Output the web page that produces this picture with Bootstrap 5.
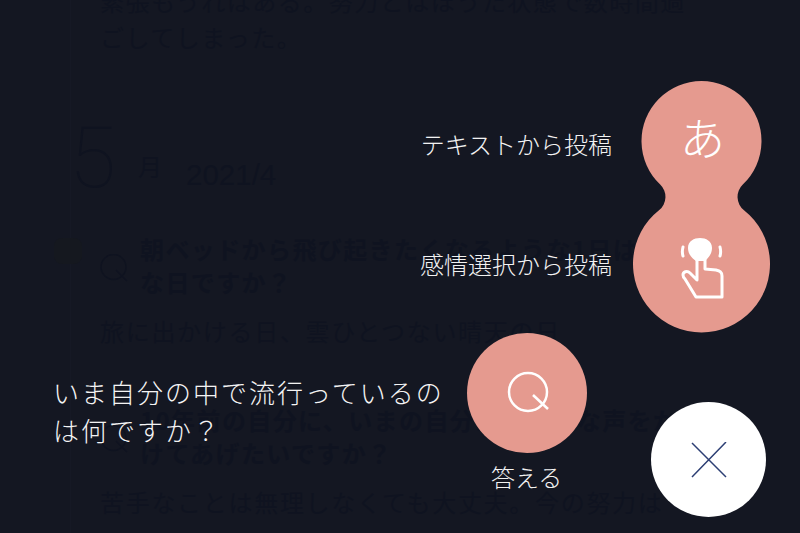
<!DOCTYPE html>
<html lang="ja">
<head>
<meta charset="utf-8">
<link href="https://cdn.jsdelivr.net/npm/bootstrap@5.3.0/dist/css/bootstrap.min.css" rel="stylesheet">
<style>
html,body{height:100%;}
body{background:#141722;overflow:hidden;font-family:"Noto Sans CJK JP","Liberation Sans",sans-serif;color:#0f1320;}
.scr{height:533px;position:relative;overflow:hidden;}
.feed{padding-left:70px;height:550px;position:relative;}
.rail{border-left:1px solid #161925;height:100%;padding-left:29px;}
.para{font-size:24px;line-height:36px;letter-spacing:1.5px;margin:-17px 0 0;width:600px;}
.num{font-family:Roboto,"Liberation Sans",sans-serif;font-weight:100;font-size:86px;line-height:70px;margin-left:-31px;width:69px;}
.mon{font-size:24px;line-height:28px;width:48px;margin-bottom:13px;}
.yr{font-family:"Liberation Sans",sans-serif;font-size:29.500px;line-height:32px;margin-bottom:2px;}
.head{margin-top:68px;align-items:flex-end;}
.qa{position:relative;}
.qmark{position:absolute;left:0;top:22px;width:28px;height:28px;}
.q-t{font-size:24px;line-height:33px;font-weight:700;letter-spacing:1.4px;padding-left:40px;width:595px;margin:0;}
.q-a{font-size:24px;line-height:34px;letter-spacing:1.700px;margin:16px 0 0;white-space:nowrap;}
.first-q{margin-top:39px;}
.next-q{margin-top:55px;}
.dotm{position:absolute;left:54px;top:255px;width:28px;height:26px;border-radius:30%;background:#15181f;}
.over{position:absolute;inset:0;color:#fff;}
.blob{position:absolute;left:633px;top:81px;width:137px;height:252px;}
.qbtn{position:absolute;left:467px;top:333px;width:120px;height:120px;border-radius:50%;background:#e59a8f;}
.xbtn{position:absolute;left:651px;top:402px;width:115px;height:115px;border-radius:50%;background:#fff;}
.lbl{position:absolute;font-size:24px;line-height:30px;color:#f2f2f2;white-space:nowrap;font-weight:300;}
.l1{right:188px;top:129px;}
.l2{right:188px;top:249px;}
.l3{left:491px;top:462px;}
.prompt{position:absolute;left:53px;top:373px;width:400px;font-size:26px;line-height:38px;letter-spacing:2px;color:#f4f4f4;margin:0;font-weight:300;}
.kana{position:absolute;left:634px;top:81px;width:137px;text-align:center;font-size:45px;line-height:112px;color:#fff;font-weight:300;}
</style>
</head>
<body>
<div class="scr">
  <div class="feed">
    <div class="rail">
      <p class="para">緊張もうれはある。努力とはほうた状態で数時間過ごしてしまった。</p>
      <div class="d-flex head">
        <span class="num">5</span><span class="mon">月</span><span class="yr">2021/4</span>
      </div>
      <div class="qa first-q">
        <svg class="qmark" viewBox="0 0 28 28"><circle cx="13.500" cy="13" r="12.500" fill="none" stroke="#0f1320" stroke-width="1.500"/><path d="M16 16l11 11" stroke="#0f1320" stroke-width="1.500"/></svg>
        <p class="q-t">朝ベッドから飛び起きたくなるような1日はどんな日ですか？</p>
        <p class="q-a">旅に出かける日、雲ひとつない晴天の日</p>
      </div>
      <div class="qa next-q">
        <svg class="qmark" viewBox="0 0 28 28"><circle cx="13.500" cy="13" r="12.500" fill="none" stroke="#0f1320" stroke-width="1.500"/><path d="M16 16l11 11" stroke="#0f1320" stroke-width="1.500"/></svg>
        <p class="q-t">10年前の自分に、いまの自分からどんな声をかけてあげたいですか？</p>
        <p class="q-a">苦手なことは無理しなくても大丈夫。今の努力は</p>
      </div>
    </div>
    <span class="dotm"></span>
  </div>
  <div class="over">
    <svg class="blob" viewBox="0 0 137 252">
      <path fill="#e59a8f" d="M109.800 103.600A17 17 0 0 0 111 129.200A68.500 68.500 0 1 1 26 129.200A17 17 0 0 0 27.200 103.600A60 60 0 1 1 109.800 103.600Z"/>
      <path fill="#fff" d="M55 167C55 160 61 157 67 157C73 157 79 160 79 167C79 174 74 178 72 180H63C60 178 55 174 55 167Z"/>
      <g fill="none" stroke="#fff" stroke-width="3" stroke-linejoin="round" stroke-linecap="round">
        <path d="M64 178V199L57 192C54 189 50 191 50 194C50 195 51 197 52 198L63 216H89V195C89 191 87 190 83 189L72 188V178"/>
        <path d="M50 166C49 170 49 172 50 175M87 166C88 170 88 172 87 175"/>
      </g>
    </svg>
    <span class="kana">あ</span>
    <span class="lbl l1">テキストから投稿</span>
    <span class="lbl l2">感情選択から投稿</span>
    <div class="qbtn d-flex align-items-center justify-content-center">
      <svg width="46" height="46" viewBox="0 0 46 46"><circle cx="24" cy="22" r="19" fill="none" stroke="#fff" stroke-width="2.500"/><path d="M29 25L44 39" stroke="#fff" stroke-width="2.500"/></svg>
    </div>
    <span class="lbl l3">答える</span>
    <p class="prompt">いま自分の中で流行っているのは何ですか？</p>
    <div class="xbtn d-flex align-items-center justify-content-center">
      <svg width="36" height="36" viewBox="0 0 36 36"><path d="M1 1L35 35M35 0L1 35" stroke="#2d3f74" stroke-width="1.500"/></svg>
    </div>
  </div>
</div>
<script src="https://cdn.jsdelivr.net/npm/bootstrap@5.3.0/dist/js/bootstrap.bundle.min.js"></script>
</body>
</html>
